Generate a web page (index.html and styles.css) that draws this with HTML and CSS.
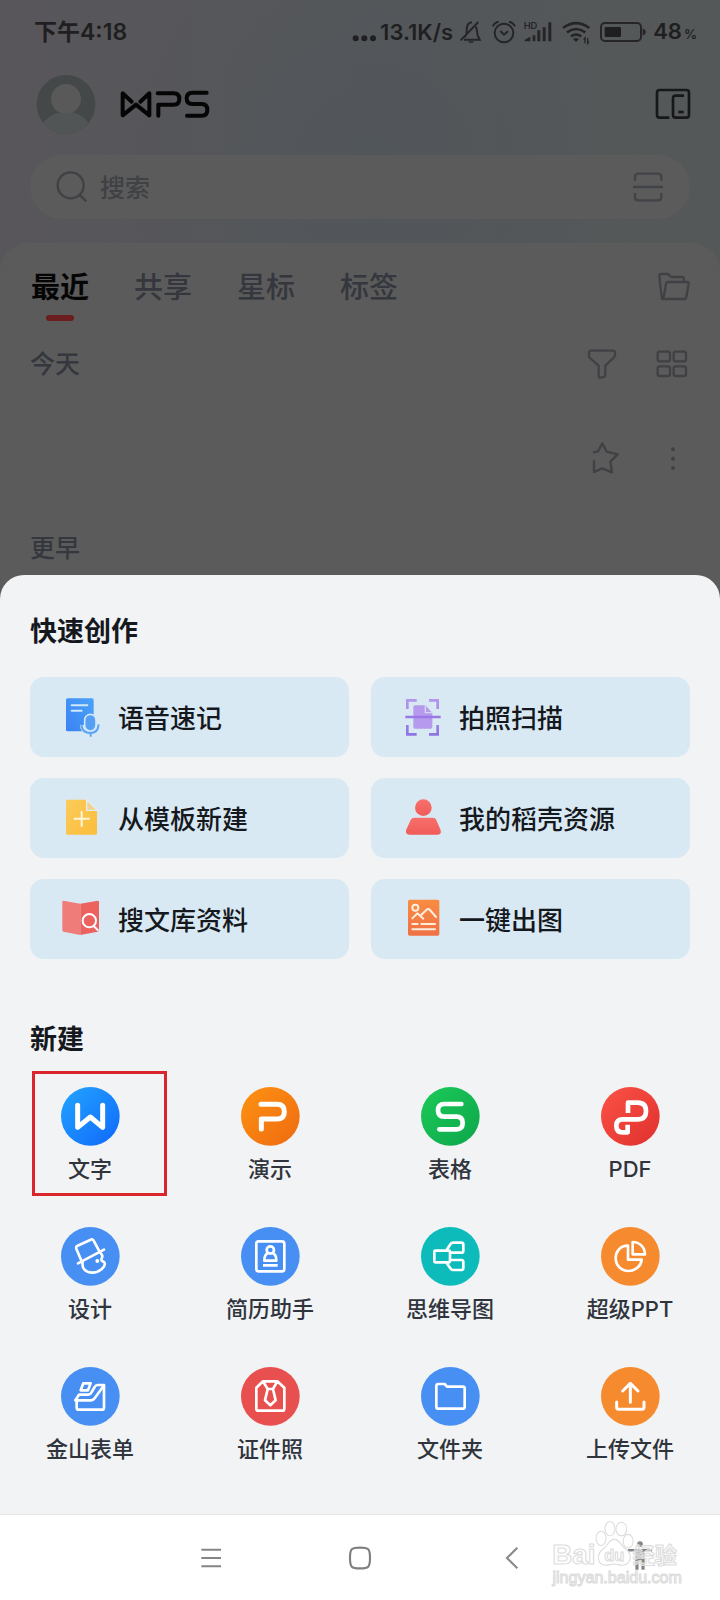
FILE: index.html
```html
<!DOCTYPE html>
<html lang="zh-CN">
<head>
<meta charset="utf-8">
<meta name="viewport" content="width=device-width, initial-scale=1">
<title>WPS</title>
<link rel="stylesheet" href="styles.css">
</head>
<body>
<div class="home">
  <div class="status">
    <span class="time">下午4:18</span>
    <div class="status-icons">
      <svg width="24" height="24" viewBox="40 60 72 72" fill="#1f1f21"><circle cx="51" cy="115" r="9"/><circle cx="77" cy="115" r="9"/><circle cx="103" cy="115" r="9"/></svg>
      <span class="speed">13.1K/s</span>
      <svg class="bell" width="22" height="24" viewBox="361 60 66 72" fill="none" stroke="#252527" stroke-width="6"><path d="M378 112 Q384 106 384 96 V90 Q384 68 400 67 M411 80 Q415 86 415 94 Q415 106 423 119 H376 M419 66 L366 121"/><path d="M388 124 H406 L402 128 H392 Z" fill="#252527" stroke="none"/></svg>
      <svg class="alarm" width="24" height="24" viewBox="458 60 72 72" fill="none" stroke="#252527" stroke-width="6"><circle cx="494" cy="99" r="28"/><path d="M483 93 L494 104 L506 94 M460 79 Q466 67 478 65 M527 79 Q521 67 509 65"/></svg>
      <svg class="signal" width="28" height="24" viewBox="553 60 84 72" fill="#252527"><path d="M555 124 V119 L572 110 V124Z M579 106 H587 V124 H579Z M593 91 H602 V124 H593Z M609 82 H618 V124 H609Z M626 67 H635 V124 H626Z"/><text x="552" y="86" class="hd">HD</text></svg>
      <svg class="wifi" width="28" height="24" viewBox="668 60 84 72" fill="none" stroke="#252527" stroke-width="8"><path d="M671 84 Q710 55 750 84 M683 97 Q710 77 738 97 M695 109 Q710 99 726 109"/><path d="M701 117 Q710 111 719 117 L710 126Z" fill="#252527" stroke="none"/><path d="M737 130 V114 L733 119 M745 114 V130 L749 125" stroke-width="4"/></svg>
      <svg class="battery" width="46" height="24" viewBox="783 60 138 72"><rect x="786" y="69" width="120" height="54" rx="12" fill="none" stroke="#252527" stroke-width="6"/><rect x="797" y="81" width="49" height="30" rx="4" fill="#1f1f21"/><path d="M911 86 Q920 87 920 96 Q920 105 911 106Z" fill="#252527"/></svg>
      <span class="level">48<small>%</small></span>
    </div>
  </div>
  <header class="header">
    <svg class="avatar" width="60" height="60" viewBox="108 221 180 180"><defs><clipPath id="av"><circle cx="198" cy="312" r="88"/></clipPath></defs><g clip-path="url(#av)"><rect x="108" y="221" width="180" height="180" fill="#454849"/><ellipse cx="198" cy="400" rx="77" ry="66" fill="#525556"/></g><circle cx="198" cy="296" r="45" fill="#585958"/></svg>
    <svg class="logo" role="img" aria-label="WPS" width="90" height="30" viewBox="360 265 270 90" fill="none" stroke="#050506" stroke-width="12" stroke-linejoin="round" stroke-linecap="round"><path d="M395 303 L368 278 V344 L408 312 L448 344 V278 L421 303"/><path d="M473 278 H521 Q538 278 538 295 Q538 312 521 312 H475 V345"/><path d="M620 276 H577 Q560 276 560 293 Q560 310 577 310 H605 Q622 310 622 328 Q622 345 605 345 H561"/></svg>
    <button class="plain push" aria-label="设备"><svg width="36" height="32" viewBox="943 265 108 96" fill="none" stroke="#17181b" stroke-width="8" stroke-linejoin="round"><path d="M986 354 H957 Q949 354 949 346 V279 Q949 271 957 271 H1037 Q1045 271 1045 279 V346 Q1045 354 1037 354 H1005 Q997 354 997 346 V296 Q997 288 1005 288 H1030"/><path d="M1013 337 H1029"/></svg></button>
  </header>
  <label class="search">
    <svg width="32" height="32" viewBox="170 514 96 96" fill="none" stroke="#3f4145" stroke-width="7"><circle cx="214" cy="557" r="39"/><path d="M240 585 L261 605"/></svg>
    <input type="text" placeholder="搜索" aria-label="搜索">
    <svg width="32" height="32" viewBox="878 514 96 96" fill="none" stroke="#424348" stroke-width="7"><path d="M887 543 V532 Q887 522 897 522 H956 Q966 522 966 532 V543 M881 562 H971 M887 580 V592 Q887 602 897 602 H956 Q966 602 966 592 V580"/></svg>
  </label>
  <main class="panel">
    <nav class="tabs">
      <button class="tab active">最近</button><button class="tab">共享</button><button class="tab">星标</button><button class="tab">标签</button>
      <button class="plain push" aria-label="文件夹"><svg width="32" height="30" viewBox="293 94 96 90" fill="none" stroke="#404145" stroke-width="7" stroke-linejoin="round"><path d="M305 175 Q300 140 297 106 Q297 100 303 100 H323 L332 109 H366 Q371 109 371 121 M317 129 Q318 124 324 124 H382 Q386 124 385 130 L378 169 Q377 175 371 175 H305 Q309 173 311 165Z"/></svg></button>
    </nav>
    <div class="group">
      <h2>今天</h2>
      <button class="plain push" aria-label="筛选"><svg width="30" height="30" viewBox="81 323 90 90" fill="none" stroke="#404145" stroke-width="7" stroke-linejoin="round"><path d="M93 328 H159 Q165 328 165 334 V342 Q165 346 161 349 L136 373 V400 Q136 405 131 407 L122 409 Q116 410 116 404 V373 L90 350 Q87 347 87 343 V334 Q87 328 93 328Z"/></svg></button>
      <button class="plain" aria-label="宫格"><svg width="30" height="30" viewBox="291 323 90 90" fill="none" stroke="#404145" stroke-width="7"><rect x="293" y="331" width="37" height="29" rx="6"/><rect x="341" y="331" width="37" height="29" rx="6"/><rect x="293" y="375" width="37" height="29" rx="6"/><rect x="341" y="375" width="37" height="29" rx="6"/></svg></button>
    </div>
    <div class="file">
      <button class="plain push" aria-label="收藏"><svg width="30" height="32" viewBox="87 604 90 96" fill="none" stroke="#404145" stroke-width="7" stroke-linejoin="round"><path d="M96 635 L111 632 L124 608 L137 633 L170 641 L148 663 L153 695 L124 683 L99 694 V659"/></svg></button>
      <button class="plain" aria-label="更多"><svg width="30" height="32" viewBox="295 604 90 96" fill="#404145"><circle cx="340" cy="626" r="6"/><circle cx="340" cy="654" r="6"/><circle cx="340" cy="682" r="6"/></svg></button>
    </div>
    <div class="group"><h2>更早</h2></div>
  </main>
</div>

<section class="sheet">
  <h1>快速创作</h1>
  <div class="features">
    <button class="feature"><svg width="40" height="40" viewBox="180 320 120 120"><defs><linearGradient id="fb" x1="1" y1="0" x2="0" y2="1"><stop offset="0" stop-color="#4ba3f8"/><stop offset="1" stop-color="#3a82f4"/></linearGradient></defs><rect x="198" y="324" width="83" height="99" rx="5" fill="url(#fb)"/><path d="M215 345 H262 M215 361 H245" stroke="#cfe8fc" stroke-width="6" stroke-linecap="round"/><path d="M246 404 Q246 426 271 426 Q296 426 296 404" fill="none" stroke="#d8eaf4" stroke-width="12"/><rect x="254" y="372" width="34" height="50" rx="17" fill="#559ff5" stroke="#cfe7f8" stroke-width="5"/><path d="M244 402 Q246 428 271 428 Q294 428 296 402 M272 428 V439" fill="none" stroke="#5ba3f4" stroke-width="6"/></svg>语音速记</button>
    <button class="feature"><svg width="40" height="40" viewBox="123 110 120 120" fill="none"><defs><linearGradient id="fp" gradientUnits="userSpaceOnUse" x1="0" y1="115" x2="0" y2="225"><stop offset="0" stop-color="#b497ee"/><stop offset="1" stop-color="#8d74e4"/></linearGradient></defs><path d="M165 135 H196 L217 158 V200 Q217 205 212 205 H165 Q160 205 160 200 V140 Q160 135 165 135Z" fill="#b59aee"/><path d="M196 135 V157 H217" stroke="#d9d8f5" stroke-width="4"/><path d="M142 146 V120 H170 M207 120 H233 V146 M142 194 V222 H170 M207 222 H233 V194" stroke="url(#fp)" stroke-width="8"/><path d="M136 170 H242" stroke="#9a79e6" stroke-width="8"/></svg>拍照扫描</button>
    <button class="feature"><svg width="40" height="40" viewBox="180 622 120 120"><defs><linearGradient id="fy" x1="0" y1="0" x2="1" y2="1"><stop offset="0" stop-color="#fbcb5a"/><stop offset="1" stop-color="#fbbd3b"/></linearGradient></defs><path d="M202 627 H259 L291 660 V727 Q291 732 286 732 H202 Q198 732 198 727 V631 Q198 627 202 627Z" fill="url(#fy)"/><path d="M260 627 L292 659 H260Z" fill="#f2d28e" stroke="#e2edf0" stroke-width="4"/><path d="M245 661 V708 M221 684 H269" stroke="#fff5d9" stroke-width="6"/></svg>从模板新建</button>
    <button class="feature"><svg width="40" height="40" viewBox="123 412 120 120"><defs><linearGradient id="fr" x1="0" y1="0" x2="0" y2="1"><stop offset="0" stop-color="#f8706c"/><stop offset="1" stop-color="#f05c59"/></linearGradient></defs><circle cx="190" cy="441" r="25" fill="url(#fr)"/><path d="M163 471 H218 Q226 471 229 478 L242 509 Q245 522 233 522 H148 Q136 522 138 509 L152 478 Q155 471 163 471Z" fill="url(#fr)"/></svg>我的稻壳资源</button>
    <button class="feature"><svg width="40" height="40" viewBox="180 925 120 120"><path d="M190 930 L241 939 V1033 L190 1023 Q187 1022 187 1018 V934 Q187 930 190 930Z" fill="#f07c79"/><path d="M241 939 L293 930 Q297 930 297 934 V1018 Q297 1022 293 1023 L241 1033Z" fill="#ec625f"/><circle cx="268" cy="990" r="20" fill="none" stroke="#fff" stroke-width="6"/><path d="M281 1006 L295 1020" stroke="#fff" stroke-width="6"/></svg>搜文库资料</button>
    <button class="feature"><svg width="40" height="40" viewBox="123 715 120 120"><defs><linearGradient id="fo" x1="0" y1="0" x2="0" y2="1"><stop offset="0" stop-color="#f98c42"/><stop offset="1" stop-color="#f07145"/></linearGradient></defs><rect x="144" y="717" width="94" height="108" rx="5" fill="url(#fo)"/><g fill="none" stroke="#ffeede" stroke-width="6" stroke-linecap="round" stroke-linejoin="round"><circle cx="166" cy="741" r="9"/><path d="M157 773 L172 758 L181 766 L190 774 M181 765 L200 747 Q205 743 210 748 L228 769 M157 790 H173 M184 790 H225 M157 806 H225"/></g></svg>一键出图</button>
  </div>
  <h1>新建</h1>
  <div class="apps">
    <button class="app marked"><svg width="59" height="59" viewBox="122 231 177 177"><defs><linearGradient id="aw" x1="0" y1="0" x2="1" y2="1"><stop offset="0" stop-color="#23a5ff"/><stop offset="1" stop-color="#1068fb"/></linearGradient></defs><circle cx="210" cy="319" r="88" fill="url(#aw)"/><path d="M172 286 V352 L210 321 L247 352 V286" fill="none" stroke="#fff" stroke-width="15" stroke-linecap="round" stroke-linejoin="round"/></svg>文字</button>
    <button class="app"><svg width="59" height="59" viewBox="662 231 177 177"><defs><linearGradient id="ap" x1="0" y1="0" x2="1" y2="1"><stop offset="0" stop-color="#fd9312"/><stop offset="1" stop-color="#ef6a10"/></linearGradient></defs><circle cx="750" cy="319" r="88" fill="url(#ap)"/><path d="M722 283 H770 Q792 283 792 305 Q792 327 770 327 H723 V357" fill="none" stroke="#fff" stroke-width="15" stroke-linecap="round" stroke-linejoin="round"/></svg>演示</button>
    <button class="app"><svg width="59" height="59" viewBox="182 81 177 177"><defs><linearGradient id="as" x1="0" y1="0" x2="1" y2="1"><stop offset="0" stop-color="#1cca58"/><stop offset="1" stop-color="#0da64b"/></linearGradient></defs><circle cx="270" cy="169" r="88" fill="url(#as)"/><path d="M303 132 H252 Q233 132 233 151 Q233 170 252 170 H289 Q307 170 307 189 Q307 208 289 208 H237" fill="none" stroke="#fff" stroke-width="14" stroke-linecap="round"/></svg>表格</button>
    <button class="app"><svg width="59" height="59" viewBox="722 81 177 177"><defs><linearGradient id="ad" x1="0" y1="0" x2="1" y2="1"><stop offset="0" stop-color="#fb5245"/><stop offset="1" stop-color="#df302e"/></linearGradient></defs><circle cx="810" cy="169" r="88" fill="url(#ad)"/><path d="M803 159 V128 H832 Q857 128 857 153 Q857 178 832 178 H787 Q768 178 768 197 Q768 217 787 217 H802 V194" fill="none" stroke="#fff" stroke-width="14" stroke-linejoin="round"/></svg>PDF</button>

    <button class="app"><svg width="59" height="59" viewBox="122 80 177 177"><circle cx="210" cy="168" r="88" fill="#478ff2"/><g fill="none" stroke="#fff" stroke-width="8" stroke-linecap="round" stroke-linejoin="round"><path d="M182 178 L168 145 Q166 139 172 136 L211 118 Q217 115 220 121 L236 151 M173 189 L251 148 M187 184 C183 204 196 217 216 217 C238 217 256 200 253 188 C252 183 243 184 243 178 C243 174 248 170 245 164 C243 160 240 160 240 155"/></g><circle cx="231" cy="182" r="6" fill="#fff"/></svg>设计</button>
    <button class="app"><svg width="59" height="59" viewBox="662 80 177 177"><circle cx="750" cy="168" r="88" fill="#478ff2"/><g fill="none" stroke="#fff" stroke-width="8" stroke-linejoin="round"><rect x="708" y="123" width="84" height="90" rx="7"/><circle cx="750" cy="149" r="11"/><path d="M743 159 Q732 162 732 181 H768 Q768 162 757 159 M728 195 H772"/></g></svg>简历助手</button>
    <button class="app"><svg width="59" height="59" viewBox="182 80 177 177"><circle cx="270" cy="168" r="88" fill="#0dbbba"/><g fill="none" stroke="#fff" stroke-width="8" stroke-linejoin="round"><rect x="222" y="151" width="47" height="35" rx="3"/><path d="M259 149 L270 132 Q273 127 279 127 H303 Q309 127 309 133 V151 Q309 157 303 157 H270 M259 188 L270 204 Q273 209 279 209 H303 Q309 209 309 203 V185 Q309 179 303 179 H270"/></g></svg>思维导图</button>
    <button class="app"><svg width="59" height="59" viewBox="722 80 177 177"><circle cx="810" cy="168" r="88" fill="#f68a2e"/><g fill="none" stroke="#fff" stroke-width="8" stroke-linejoin="round"><path d="M803 136 C780 136 766 153 766 173 C766 195 783 212 804 212 C826 212 843 196 844 178 H803Z M817 125 C838 125 853 140 854 162 H817Z"/></g></svg>超级PPT</button>

    <button class="app"><svg width="59" height="59" viewBox="122 498 177 177"><circle cx="210" cy="586" r="88" fill="#478ff2"/><g fill="none" stroke="#fff" stroke-width="8" stroke-linejoin="round" stroke-linecap="round"><path d="M189 547 H211 L203 568 H181Z M251 552 H232 Q226 552 223 558 L213 575 Q210 581 204 581 H176 L165 598 H212 Q219 598 223 592 L250 554 M169 600 V620 Q169 626 175 626 H245 Q251 626 251 620 V552"/></g></svg>金山表单</button>
    <button class="app"><svg width="59" height="59" viewBox="662 498 177 177"><circle cx="750" cy="586" r="88" fill="#e8504f"/><g fill="none" stroke="#fff" stroke-width="8" stroke-linejoin="round"><path d="M728 541 H771 L792 560 V623 Q792 629 786 629 H714 Q708 629 708 623 V560Z M728 541 L742 564 L734 598 L750 613 L766 598 L758 564 L771 541 M742 564 H758"/></g></svg>证件照</button>
    <button class="app"><svg width="59" height="59" viewBox="182 498 177 177"><circle cx="270" cy="586" r="88" fill="#478ff2"/><path d="M234 549 H253 L260 557 H307 Q313 557 313 563 V617 Q313 623 307 623 H234 Q228 623 228 617 V555 Q228 549 234 549Z" fill="none" stroke="#fff" stroke-width="8" stroke-linejoin="round"/></svg>文件夹</button>
    <button class="app"><svg width="59" height="59" viewBox="722 498 177 177"><circle cx="810" cy="586" r="88" fill="#f68a2e"/><g fill="none" stroke="#fff" stroke-width="9" stroke-linecap="round" stroke-linejoin="round"><path d="M810 604 V548 M787 570 L810 547 L833 570 M769 603 V619 Q769 625 775 625 H845 Q851 625 851 619 V603"/></g></svg>上传文件</button>
  </div>
</section>

<nav class="navbar">
  <button class="plain" aria-label="菜单"><svg width="30" height="30" viewBox="101 157 84 84" stroke="#858585" stroke-width="6" fill="none"><path d="M116 176 H171 M116 199 H171 M116 222 H171"/></svg></button>
  <button class="plain" aria-label="主页"><svg width="30" height="30" viewBox="518 158 84 84" stroke="#808080" stroke-width="6" fill="none"><path d="M532 200 C532 174 536 171 560 171 C584 171 588 174 588 200 C588 226 584 229 560 229 C536 229 532 226 532 200Z"/></svg></button>
  <button class="plain" aria-label="返回"><svg width="30" height="30" viewBox="942 158 84 84" stroke="#8a8a8a" stroke-width="6" fill="none"><path d="M999 171 L970 200 L999 229"/></svg></button>
  <button class="plain" aria-label="无障碍"><svg width="30" height="30" viewBox="1301 158 84 84" fill="#858585"><circle cx="1343" cy="161" r="8"/><path d="M1309 175 H1377 V182 H1356 V233 H1347 V210 H1339 V233 H1330 V182 H1309Z"/></svg></button>
  <svg class="watermark" width="132" height="70" viewBox="1092 90 370 196">
    <g fill="#fff" fill-opacity="0.5" stroke="#dcdcdc" stroke-width="3">
      <text x="1098" y="217" class="wm-big">Bai</text>
      <path d="M1272 147 C1288 147 1290 165 1304 174 C1323 187 1321 215 1298 219 C1288 221 1282 216 1272 216 C1262 216 1254 221 1244 219 C1223 215 1223 187 1241 174 C1254 165 1257 147 1272 147Z"/>
      <ellipse cx="1235" cy="144" rx="14" ry="20"/><ellipse cx="1260" cy="117" rx="14" ry="20"/><ellipse cx="1292" cy="118" rx="15" ry="19"/><ellipse cx="1311" cy="152" rx="14" ry="19"/>
      <text x="1244" y="207" class="wm-du">du</text>
      <text x="1324" y="212" class="wm-cjk">经验</text>
      <text x="1099" y="268" class="wm-url">jingyan.baidu.com</text>
    </g>
  </svg>
</nav>
</body>
</html>
```
FILE: styles.css
```css
*, *::before, *::after { box-sizing: border-box; }

body {
  margin: 0;
  min-height: 100vh;
  display: flex;
  flex-direction: column;
  background: #fff;
  font-family: Inter, "Noto Sans CJK SC", sans-serif;
  font-weight: 500;
  color: #15181d;
}

svg { display: block; flex: none; overflow: visible; }
h1, h2 { margin: 0; }

button {
  border: 0;
  margin: 0;
  padding: 0;
  background: none;
  font: inherit;
  color: inherit;
}

.push { margin-left: auto; }

.home {
  background:
    radial-gradient(ellipse at 52% 30%, #51565a 0, #51565a00 50%),
    linear-gradient(90deg, #58565a 0%, #55575a 60%, #555858 100%);
}

.status {
  height: 64px;
  padding: 0 23px 0 34px;
  display: flex;
  align-items: center;
  justify-content: space-between;
  color: #1f1f21;
  font-size: 22px;
  line-height: 28px;
  font-weight: 600;
}
.time { font-size: 23px; }
.status-icons { display: flex; align-items: center; }
.speed { margin-left: 4px; }
.bell { margin-left: 6px; }
.alarm { margin-left: 11px; }
.signal { margin-left: 8px; }
.wifi { margin-left: 10px; }
.battery { margin-left: 10px; }
.level { margin-left: 7px; }
.level small { margin-left: 2px; font-size: 13px; }
.hd { font-size: 28px; font-weight: 600; }

.header {
  height: 80px;
  padding: 0 29px 0 36px;
  display: flex;
  align-items: center;
  gap: 24px;
}

.search {
  height: 64px;
  margin: 11px 30px 24px;
  padding: 0 26px;
  display: flex;
  align-items: center;
  gap: 12px;
  border-radius: 32px;
  background: #5b5b5b;
}
.search input {
  flex: 1;
  min-width: 0;
  padding: 2px 0 0;
  border: 0;
  outline: 0;
  background: none;
  font: inherit;
  font-size: 25px;
}
.search input::placeholder { color: #3f4145; opacity: 1; }

.panel {
  padding: 0 30px 18px;
  border-radius: 28px 28px 0 0;
  background: #5b5b5b;
}
.tabs {
  height: 88px;
  display: flex;
  align-items: center;
  gap: 45px;
  padding-left: 1px;
}
.tab {
  position: relative;
  height: 88px;
  padding-top: 2px;
  font-size: 29px;
  line-height: 40px;
  color: #34373d;
}
.tab.active { color: #050506; font-weight: 700; }
.tab.active::after {
  content: "";
  position: absolute;
  left: 15px;
  right: 15px;
  top: 72px;
  height: 6px;
  border-radius: 3px;
  background: #6b1d1f;
}
.group, .file {
  height: 66px;
  display: flex;
  align-items: center;
  gap: 40px;
  padding-right: 3px;
}
.group h2 { font-size: 25px; line-height: 36px; font-weight: 500; color: #34373d; }
.file { height: 118px; padding: 4px 2px 0 0; gap: 38px; }

.sheet {
  position: relative;
  flex: 1;
  margin-top: -24px;
  padding: 37px 0 7px;
  border-radius: 24px 24px 0 0;
  background: #f1f3f5;
}
.sheet h1 {
  padding: 0 30px;
  font-size: 27px;
  line-height: 40px;
  font-weight: 700;
}
.features {
  margin: 25px 30px 61px;
  display: grid;
  grid-template-columns: 1fr 1fr;
  gap: 21px 22px;
}
.feature {
  height: 80px;
  padding: 0 30px;
  display: flex;
  align-items: center;
  gap: 18px;
  border-radius: 14px;
  background: #d8e9f3;
  font-family: "Noto Sans CJK SC", sans-serif;
  font-size: 26px;
  line-height: 36px;
  white-space: nowrap;
}

.apps {
  margin-top: 27px;
  display: grid;
  grid-template-columns: repeat(4, 1fr);
  grid-auto-rows: 140px;
}
.app {
  position: relative;
  display: flex;
  flex-direction: column;
  align-items: center;
  gap: 8px;
  font-size: 22px;
  line-height: 30px;
  color: #30343c;
}
.marked::before {
  content: "";
  position: absolute;
  left: 32px;
  top: -16px;
  width: 135px;
  height: 125px;
  border: 3px solid #da252c;
}

.navbar {
  position: relative;
  height: 87px;
  padding: 0 65px 0 196px;
  display: grid;
  grid-template-columns: 149fr 152fr 128fr 30px;
  align-items: center;
  border-top: 1px solid #e4e4e4;
  background: #fff;
}
.watermark {
  position: absolute;
  right: 38px;
  top: 4px;
}
.wm-big { font: 700 78px "Liberation Sans", sans-serif; }
.wm-du { font: 700 46px "Liberation Sans", sans-serif; }
.wm-cjk { font: 700 62px "Noto Sans CJK SC", sans-serif; }
.wm-url { font: 400 45px "Liberation Sans", sans-serif; }
```
